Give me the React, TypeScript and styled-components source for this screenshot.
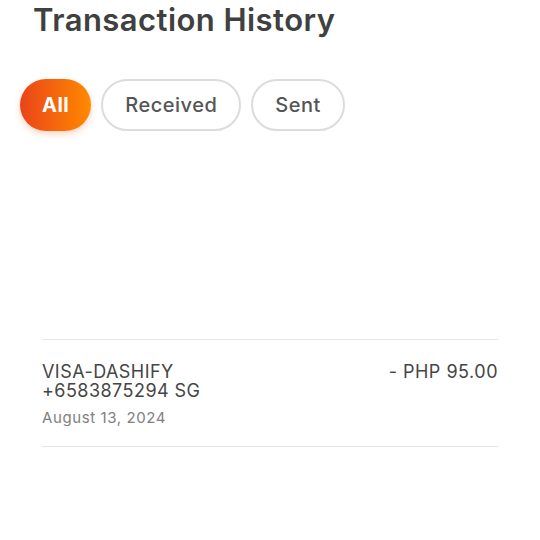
import React from 'react'
import {createGlobalStyle, styled} from 'styled-components'

const GlobalStyle = createGlobalStyle`
    html, body {
        margin: 0;
        padding: 0;
        background: #fff;
        font-family: Inter, "Noto Sans", sans-serif;
    }
`

interface Transaction {
    name: string
    phone: string
    date: string
    amount: string
}

const transactions: Transaction[] = [
    {name: 'VISA-DASHIFY', phone: '+6583875294 SG', date: 'August 13, 2024', amount: '- PHP 95.00'},
]

const filters = ['All', 'Received', 'Sent']

const App: React.FC = () => {
    return (
        <>
            <GlobalStyle/>
            <Page>
                <Title>Transaction History</Title>
                <FilterRow>
                    {filters.map((f, i) => (
                        <FilterPill key={f} $active={i === 0}>{f}</FilterPill>
                    ))}
                </FilterRow>
                <List>
                    {transactions.map((t) => (
                        <Row key={t.name}>
                            <Info>
                                <Name>{t.name}</Name>
                                <Name>{t.phone}</Name>
                                <DateText>{t.date}</DateText>
                            </Info>
                            <Amount>{t.amount}</Amount>
                        </Row>
                    ))}
                </List>
            </Page>
        </>
    )
}

export default App

const Page = styled.div`
    width: 540px;
    height: 540px;
    overflow: hidden;
    display: flex;
    flex-direction: column;
`

const Title = styled.h1`
    margin: 1px 0 0 33px;
    font-size: 31px;
    font-weight: 600;
    color: #404040;
    line-height: 38px;
    letter-spacing: 0.45px;
`

const FilterRow = styled.div`
    display: flex;
    gap: 10px;
    margin: 40px 0 0 20px;
`

const FilterPill = styled.div<{ $active?: boolean }>`
    height: 52px;
    box-sizing: border-box;
    padding: 0 22px;
    display: flex;
    align-items: center;
    border-radius: 26px;
    font-size: 20px;
    letter-spacing: 0.5px;
    font-weight: ${p => p.$active ? 700 : 500};
    color: ${p => p.$active ? '#fff' : '#555'};
    background: ${p => p.$active ? 'linear-gradient(90deg, #ea4419 0%, #ff8a00 100%)' : '#fff'};
    border: ${p => p.$active ? 'none' : '2px solid #dcdcdc'};
    box-shadow: ${p => p.$active ? '0 3px 6px rgba(234, 80, 20, 0.25)' : 'none'};
`

const List = styled.div`
    margin: 208px 42px 0 42px;
    border-top: 1px solid #e6e6e6;
`

const Row = styled.div`
    display: flex;
    justify-content: space-between;
    align-items: flex-start;
    padding: 22px 0 19px;
    border-bottom: 1px solid #e6e6e6;
`

const Info = styled.div`
    display: flex;
    flex-direction: column;
`

const Name = styled.div`
    font-size: 18px;
    line-height: 19px;
    letter-spacing: 0.45px;
    color: #454545;
`

const DateText = styled.div`
    margin-top: 9px;
    font-size: 15px;
    line-height: 18px;
    letter-spacing: 0.6px;
    color: #808080;
`

const Amount = styled.div`
    font-size: 18px;
    line-height: 19px;
    letter-spacing: 0.5px;
    color: #454545;
`
